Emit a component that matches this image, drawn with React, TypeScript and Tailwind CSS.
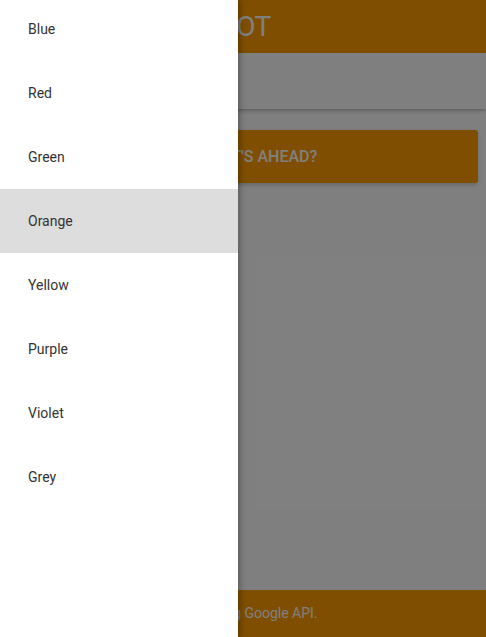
const colors = ["Blue", "Red", "Green", "Orange", "Yellow", "Purple", "Violet", "Grey"];

export default function App() {
  const active = "Orange";

  return (
    <div className="relative h-[637px] w-[486px] overflow-hidden bg-white font-['Roboto',sans-serif]">
      <div className="flex h-full flex-col">
        <header className="flex h-[53px] shrink-0 items-center bg-[#ff9d00] pl-[54px]">
          <h1 className="text-[28px] font-normal tracking-tight text-white">CHAT COLOR BOT</h1>
        </header>
        <div className="h-[56px] shrink-0 bg-white shadow-[0_2px_4px_rgba(0,0,0,0.25)]" />
        <div className="px-2 pt-[21px]">
          <button
            type="button"
            className="flex h-[53px] w-full items-center justify-center rounded-[3px] bg-[#ff9d00] text-[16px] font-medium text-white shadow-[0_2px_4px_rgba(0,0,0,0.2)]"
          >
            SO, WHAT'S AHEAD?
          </button>
        </div>
        <div className="flex-1" />
        <footer className="flex h-[47px] shrink-0 items-center justify-center bg-[#ff9d00] text-[14px] text-white">
          Made using Google API.
        </footer>
      </div>

      <div className="absolute inset-0 bg-black/50" />

      <nav className="absolute top-0 left-0 h-full w-[238px] bg-white shadow-[2px_0_6px_rgba(0,0,0,0.3)]">
        <ul className="-mt-[3px]">
          {colors.map((c) => (
            <li
              key={c}
              className={
                c === active
                  ? "flex h-[64px] items-center bg-[#dddddd] pl-[28px] text-[14px] text-[#333333]"
                  : "flex h-[64px] items-center pl-[28px] text-[14px] text-[#333333]"
              }
            >
              {c}
            </li>
          ))}
        </ul>
      </nav>
    </div>
  );
}
